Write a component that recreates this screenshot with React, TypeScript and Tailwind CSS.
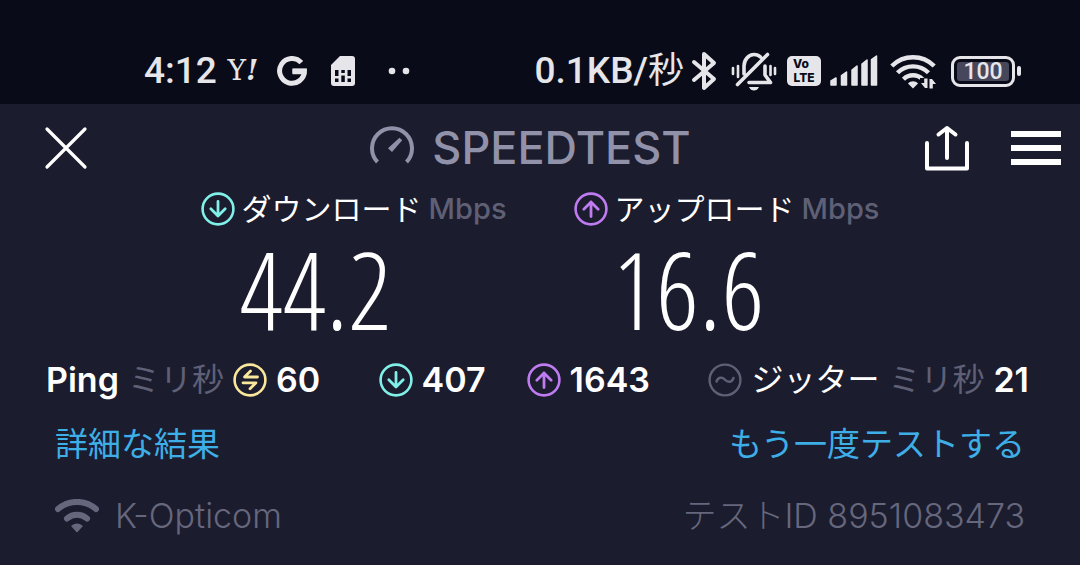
import React from "react";

const latin = "font-[Inter,'Noto_Sans_CJK_JP',sans-serif]";

type Tone = { className?: string };

function ArrowCircle({ up = false, className = "" }: Tone & { up?: boolean }) {
  return (
    <svg viewBox="0 0 34 34" className={`size-[34px] shrink-0 ${className}`} fill="none" stroke="currentColor" aria-hidden="true">
      <circle cx="17" cy="17" r="15.4" strokeWidth="2.6" />
      <path
        d={up ? "M17 24.5V10M9.8 17.2 17 10l7.2 7.2" : "M17 9.5V24M9.8 16.8 17 24l7.2-7.2"}
        strokeWidth="2.8"
        strokeLinecap="round"
        strokeLinejoin="round"
      />
    </svg>
  );
}

function PingIcon() {
  return (
    <svg viewBox="0 0 34 34" className="size-[34px] shrink-0 text-[#f9e79c]" fill="none" stroke="currentColor" aria-hidden="true">
      <circle cx="17" cy="17" r="15.4" strokeWidth="2.6" />
      <path d="M24.500 14H11.500l6-6M10 19.800H23l-6 6" strokeWidth="2.8" strokeLinecap="round" strokeLinejoin="round" />
    </svg>
  );
}

function JitterIcon() {
  return (
    <svg viewBox="0 0 34 34" className="size-[34px] shrink-0 text-[#5f6076]" fill="none" stroke="currentColor" aria-hidden="true">
      <circle cx="17" cy="17" r="15.4" strokeWidth="2.4" />
      <path d="M8.500 18.500c1.500-4.500 5.500-5 8.500-1.800s7 2.700 8.500-1.700" strokeWidth="2.4" strokeLinecap="round" />
    </svg>
  );
}

function StatusBar() {
  return (
    <div className="flex h-[104px] items-center justify-between bg-[#090b18] pt-[38px] pr-[59px] pl-36 text-[#e6e6ea]">
      <div className="flex items-center">
        <span className="font-[Roboto,sans-serif] text-[37px] leading-10 font-medium">4:12</span>
        <span className="ml-2 flex w-9 items-center justify-center font-['DejaVu_Serif',serif] text-[28px] leading-8 font-medium">
          Y<i className="font-bold">!</i>
        </span>
        <svg viewBox="0 0 30 30" className="ml-4 size-[30px]" fill="none" stroke="currentColor" strokeWidth="5" aria-label="Google">
          <path d="M24.300 6.700A12.400 12.400 0 1 0 27.400 15H15.500" />
          <path d="M15.500 15.500H29.500" strokeWidth="5.500" />
        </svg>
        <svg viewBox="0 0 24 30" className="ml-6 h-[30px] w-6" aria-label="SIM">
          <path d="M9 0h12a3 3 0 0 1 3 3v24a3 3 0 0 1-3 3H3a3 3 0 0 1-3-3V9z" fill="currentColor" />
          <path d="M4 14h3.500v6H4zM10.300 14h3.500v3h-3.500zM16.500 14H20v6h-3.500zM4 22.500h3.500V26H4zM10.300 19.500h3.500V26h-3.500zM16.500 22.500H20V26h-3.500z" fill="#090b18" />
        </svg>
        <svg viewBox="0 0 22 8" className="ml-[33px] h-2 w-[22px]" fill="currentColor" aria-hidden="true">
          <circle cx="4" cy="4" r="3.300" />
          <circle cx="18" cy="4" r="3.300" />
        </svg>
      </div>
      <div className="flex items-center">
        <span className="font-[Roboto,'Noto_Sans_CJK_JP',sans-serif] text-[37px] leading-10 font-medium">
          0.1KB/<span className="text-[36px] font-normal">秒</span>
        </span>
        <svg viewBox="0 0 26 40" className="ml-[7px] h-10 w-[26px]" fill="none" stroke="currentColor" strokeWidth="4" strokeLinecap="round" strokeLinejoin="round" aria-label="Bluetooth">
          <path d="m3 11 20 17-10 9V3l10 9L3 29" />
        </svg>
        <svg viewBox="0 0 46 40" className="ml-[14px] h-10 w-[46px]" fill="none" stroke="currentColor" strokeWidth="3.600" strokeLinecap="round" strokeLinejoin="round" aria-label="バイブ">
          <path d="M13 23V15c0-6 4.500-11.500 10-11.500 3 0 5 1 6.500 2.500M34 15v9l5.500 7.500H18M6.500 33.500 36.500 3.500" />
          <path d="M2 17v6M7 15v11M39.500 15v9M44 17v6" strokeWidth="2.600" />
          <path d="M18 36h10c-1 2.500-3 3.500-5 3.500s-4-1-5-3.500z" fill="currentColor" stroke="none" />
        </svg>
        <span className="ml-[10px] flex h-[30px] w-[34px] flex-col items-center justify-center rounded-[5px] bg-current font-[Inter,sans-serif] text-[12px] leading-[14px] font-extrabold">
          <span className="self-start pl-[6px] text-[#090b18]">Vo</span>
          <span className="text-[#090b18]">LTE</span>
        </span>
        <svg viewBox="0 0 48 32" className="ml-[9px] h-8 w-12" fill="currentColor" stroke="currentColor" strokeWidth="1.500" strokeLinejoin="round" aria-label="電波">
          <path d="M1 30v-4l5-3v7zM11.500 30V20.500l5-3.500v13zM22 30V15l5-4v19zM32 30V9l5-4v25zM41.500 30V4.500l5-3.500v29z" />
        </svg>
        <svg viewBox="0 0 46 36" className="ml-3 h-9 w-[46px]" fill="none" stroke="currentColor" strokeWidth="4.400" aria-label="Wi-Fi">
          <path d="M1.800 13a30 30 0 0 1 42.400 0M7.500 19.800a22 22 0 0 1 31 0M13.500 26.200a13.500 13.500 0 0 1 19 0" />
          <path d="M18 30.500c2.500-3 7.500-3 10 0L23 35.500z" fill="currentColor" stroke="none" />
          <path d="M30 25h16v11H30z" fill="#090b18" stroke="none" />
          <path d="M37.500 25.500V35h-2.500l-4-5h3.200v-4.500zM39.500 35.500V26H42l4 5h-3.200v4.500z" fill="currentColor" stroke="none" />
        </svg>
        <span className="ml-[15px] flex h-[31px] w-16 items-center justify-center rounded-[9px] border-[3px] border-current p-[3px]">
          <span className="flex h-full w-full items-center justify-center rounded-[3px] bg-[#46475a] pt-0.5 font-[Roboto,sans-serif] text-[23px] leading-5 font-medium">
            100
          </span>
        </span>
        <span className="ml-0.5 h-[10px] w-1 rounded-full bg-current" />
      </div>
    </div>
  );
}

function Header() {
  return (
    <header className="grid h-[88px] grid-cols-[1fr_auto_1fr] items-center pr-[19px] pl-11">
      <button type="button" aria-label="閉じる" className="justify-self-start">
        <svg viewBox="0 0 44 44" className="size-11" fill="none" stroke="#fff" strokeWidth="3.200" strokeLinecap="round">
          <path d="m3 3 38 38M41 3 3 41" />
        </svg>
      </button>
      <h1 className="mr-11 flex items-center gap-[18px] text-[#9192a9]">
        <svg viewBox="0 0 44 44" className="size-11" fill="none" stroke="currentColor" strokeWidth="4" aria-hidden="true">
          <path d="M7.500 36a20 20 0 1 1 29 0" />
          <path d="m18 22.300 11.500-10.500 2.700 2.500L22 26z" fill="currentColor" stroke="none" />
        </svg>
        <span className="text-[45px] leading-[52px] font-medium">SPEEDTEST</span>
      </h1>
      <div className="flex items-center gap-[42px] justify-self-end">
        <button type="button" aria-label="共有">
          <svg viewBox="0 0 44 46" className="h-[46px] w-11" fill="none" stroke="#fff" strokeWidth="4" strokeLinecap="round" strokeLinejoin="round">
            <path d="M2 18v25.500h40V18M22 33V3M13.500 9.500 22 3l8.500 6.500" />
          </svg>
        </button>
        <button type="button" aria-label="メニュー" className="flex flex-col gap-2">
          <span className="h-[6px] w-[50px] bg-white" />
          <span className="h-[6px] w-[50px] bg-white" />
          <span className="h-[6px] w-[50px] bg-white" />
        </button>
      </div>
    </header>
  );
}

function Speed({ up, label, value }: { up?: boolean; label: string; value: string }) {
  return (
    <div>
      <div className="flex h-[34px] items-center gap-[7px] text-[30px] leading-[34px]">
        <ArrowCircle up={up} className={up ? "text-[#bf7bf0]" : "text-[#80f0e8]"} />
        <span className="text-white">{label}</span>
        <span className="text-[29px] font-medium text-[#5f6076]">Mbps</span>
      </div>
      <div className="mt-[13px] pr-[76px] text-center font-['Open_Sans_Condensed_Light','Open_Sans_Condensed','Roboto_Condensed_Light','Roboto_Condensed','Noto_Sans_ExtraCondensed_Light','Liberation_Sans_Narrow',Roboto,sans-serif] text-[108px] leading-[100px] font-light text-white">
        {value}
      </div>
    </div>
  );
}

export default function App() {
  return (
    <div className={`min-h-screen bg-[#1b1c2e] ${latin}`}>
      <StatusBar />
      <Header />
      <main>
        <section className="flex h-[150px] justify-center gap-[67px]">
          <Speed label="ダウンロード" value="44.2" />
          <Speed up label="アップロード" value="16.6" />
        </section>
        <section className="mt-4 flex h-11 items-center justify-between pr-[51px] pl-[46px] text-[34px] leading-11 font-semibold whitespace-nowrap text-white">
          <div className="flex items-center gap-[9px]">
            <span>Ping</span>
            <span className="text-[32px] font-normal text-[#5f6076]">ミリ秒</span>
            <PingIcon />
            <span>60</span>
          </div>
          <div className="flex items-center">
            <div className="flex w-[148px] items-center gap-[9px]">
              <ArrowCircle className="text-[#80f0e8]" />
              <span>407</span>
            </div>
            <div className="flex items-center gap-[9px]">
              <ArrowCircle up className="text-[#bf7bf0]" />
              <span>1643</span>
            </div>
          </div>
          <div className="flex items-center gap-[9px]">
            <JitterIcon />
            <span className="text-[32px] font-normal">ジッター</span>
            <span className="text-[32px] font-normal text-[#5f6076]">ミリ秒</span>
            <span>21</span>
          </div>
        </section>
        <nav className="mt-5 flex h-11 items-center justify-between px-[55px] text-[33px] leading-11 text-[#3eaee6]">
          <a href="#details">詳細な結果</a>
          <a href="#retest">もう一度テストする</a>
        </nav>
        <footer className="mt-7 flex h-11 items-center justify-between px-[55px] text-[34px] leading-11 font-light text-[#66677d]">
          <div className="flex items-center gap-4">
            <svg viewBox="0 0 44 34" className="h-[34px] w-11" fill="none" stroke="currentColor" strokeWidth="6" strokeLinecap="round" aria-hidden="true">
              <path d="M3 10a29 29 0 0 1 38 0M12 19.500a15.500 15.500 0 0 1 20 0" />
              <path d="M17 27q5-3.500 10 0l-5 5.500z" fill="currentColor" strokeWidth="1.500" strokeLinejoin="round" />
            </svg>
            <span>K-Opticom</span>
          </div>
          <span>テストID 8951083473</span>
        </footer>
      </main>
    </div>
  );
}
